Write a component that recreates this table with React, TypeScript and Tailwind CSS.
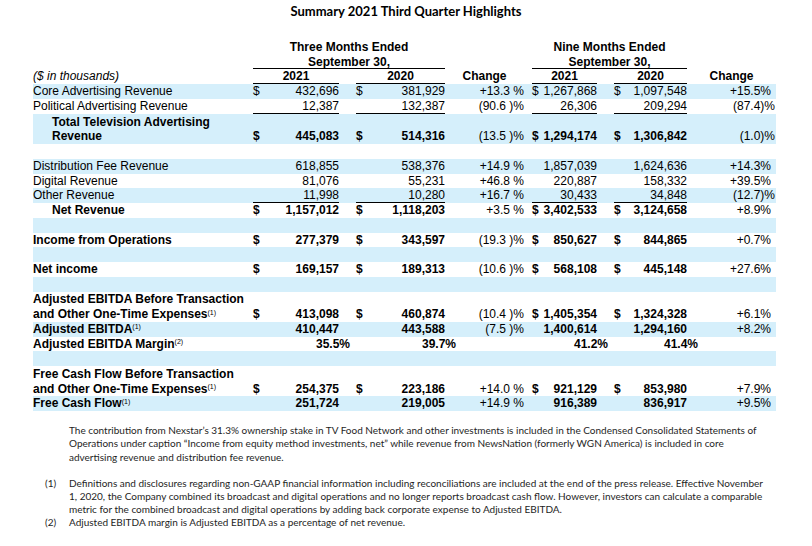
import type React from 'react';
import clsx from 'clsx';

type Four = [string, string, string, string];

type Line = {
  label?: React.ReactNode;
  band?: boolean;
  bold?: boolean;
  indent?: boolean;
  tall?: boolean;
  values?: Four;
  dollars?: boolean;
  change?: [string, string];
  rule?: boolean;
  margin?: boolean;
};

const Note = ({ n }: { n: string }) => <sup className="text-[7px] font-normal">({n})</sup>;

const lines: Line[] = [
  {
    label: 'Core Advertising Revenue',
    band: true,
    dollars: true,
    values: ['432,696', '381,929', '1,267,868', '1,097,548'],
    change: ['+13.3 %', '+15.5%'],
  },
  {
    label: 'Political Advertising Revenue',
    rule: true,
    values: ['12,387', '132,387', '26,306', '209,294'],
    change: ['(90.6 )%', '(87.4)%'],
  },
  {
    label: (
      <>
        Total Television Advertising
        <br />
        Revenue
      </>
    ),
    band: true,
    bold: true,
    indent: true,
    tall: true,
    dollars: true,
    values: ['445,083', '514,316', '1,294,174', '1,306,842'],
    change: ['(13.5 )%', '(1.0)%'],
  },
  {},
  {
    label: 'Distribution Fee Revenue',
    band: true,
    values: ['618,855', '538,376', '1,857,039', '1,624,636'],
    change: ['+14.9 %', '+14.3%'],
  },
  {
    label: 'Digital Revenue',
    values: ['81,076', '55,231', '220,887', '158,332'],
    change: ['+46.8 %', '+39.5%'],
  },
  {
    label: 'Other Revenue',
    band: true,
    rule: true,
    values: ['11,998', '10,280', '30,433', '34,848'],
    change: ['+16.7 %', '(12.7)%'],
  },
  {
    label: 'Net Revenue',
    bold: true,
    indent: true,
    dollars: true,
    values: ['1,157,012', '1,118,203', '3,402,533', '3,124,658'],
    change: ['+3.5 %', '+8.9%'],
  },
  { band: true },
  {
    label: 'Income from Operations',
    bold: true,
    dollars: true,
    values: ['277,379', '343,597', '850,627', '844,865'],
    change: ['(19.3 )%', '+0.7%'],
  },
  { band: true },
  {
    label: 'Net income',
    bold: true,
    dollars: true,
    values: ['169,157', '189,313', '568,108', '445,148'],
    change: ['(10.6 )%', '+27.6%'],
  },
  { band: true },
  {
    label: (
      <>
        Adjusted EBITDA Before Transaction
        <br />
        and Other One-Time Expenses
        <Note n="1" />
      </>
    ),
    bold: true,
    tall: true,
    dollars: true,
    values: ['413,098', '460,874', '1,405,354', '1,324,328'],
    change: ['(10.4 )%', '+6.1%'],
  },
  {
    label: (
      <>
        Adjusted EBITDA
        <Note n="1" />
      </>
    ),
    band: true,
    bold: true,
    values: ['410,447', '443,588', '1,400,614', '1,294,160'],
    change: ['(7.5 )%', '+8.2%'],
  },
  {
    label: (
      <>
        Adjusted EBITDA Margin
        <Note n="2" />
      </>
    ),
    bold: true,
    margin: true,
    values: ['35.5%', '39.7%', '41.2%', '41.4%'],
  },
  { band: true },
  {
    label: (
      <>
        Free Cash Flow Before Transaction
        <br />
        and Other One-Time Expenses
        <Note n="1" />
      </>
    ),
    bold: true,
    tall: true,
    dollars: true,
    values: ['254,375', '223,186', '921,129', '853,980'],
    change: ['+14.0 %', '+7.9%'],
  },
  {
    label: (
      <>
        Free Cash Flow
        <Note n="1" />
      </>
    ),
    band: true,
    bold: true,
    values: ['251,724', '219,005', '916,389', '836,917'],
    change: ['+14.9 %', '+9.5%'],
  },
];

// widths of the four money columns, left to right
const moneyWidths = ['w-[86px]', 'w-[89px]', 'w-[65px]', 'w-[73px]'];

function Money({ index, line }: { index: number; line: Line }) {
  const value = line.values?.[index];
  return (
    <div
      className={clsx(
        'flex h-[14.75px] shrink-0 justify-between',
        moneyWidths[index],
        line.rule && 'border-b border-black',
        line.bold && 'font-bold',
      )}
    >
      <span>{line.dollars ? '$' : ''}</span>
      {line.margin ? <span className="-mr-[11px]">{value}</span> : <span>{value}</span>}
    </div>
  );
}

function Change({ value, wide }: { value?: string; wide?: boolean }) {
  if (wide) {
    const positive = value?.startsWith('+');
    return (
      <div className={clsx('h-[14.75px] w-[89px] shrink-0 text-right', positive ? 'pr-[5px]' : 'pr-px')}>{value}</div>
    );
  }
  return <div className="h-[14.75px] w-[79px] shrink-0 text-right">{value}</div>;
}

function Row({ line }: { line: Line }) {
  return (
    <div
      className={clsx(
        'flex items-end leading-[14.75px]',
        line.tall ? 'h-[30.3px]' : 'h-[14.75px]',
        line.band && 'bg-[#d5effb]',
      )}
    >
      <div className={clsx('w-[220px] shrink-0 self-stretch', line.indent && 'pl-[19px]', line.bold && 'font-bold')}>
        <div className="flex h-full flex-col justify-end">
          <div>{line.label}</div>
        </div>
      </div>
      <Money index={0} line={line} />
      <div className="w-[17px] shrink-0" />
      <Money index={1} line={line} />
      <Change value={line.change?.[0]} />
      <div className="w-[8px] shrink-0" />
      <Money index={2} line={line} />
      <div className="w-[17px] shrink-0" />
      <Money index={3} line={line} />
      <Change value={line.change?.[1]} wide />
    </div>
  );
}

function Header() {
  return (
    <>
      <div className="flex h-[29px] font-bold leading-[14.5px]">
        <div className="w-[220px] shrink-0" />
        <div className="w-[192px] shrink-0 border-b border-black text-center">
          Three Months Ended
          <br />
          September 30,
        </div>
        <div className="w-[87px] shrink-0" />
        <div className="w-[155px] shrink-0 border-b border-black text-center">
          Nine Months Ended
          <br />
          September 30,
        </div>
      </div>
      <div className="flex h-[15.3px] leading-[15px]">
        <div className="w-[220px] shrink-0 italic">($ in thousands)</div>
        <div className="w-[86px] shrink-0 border-b border-black text-center font-bold">2021</div>
        <div className="w-[17px] shrink-0" />
        <div className="w-[89px] shrink-0 border-b border-black text-center font-bold">2020</div>
        <div className="w-[79px] shrink-0 text-center font-bold">Change</div>
        <div className="w-[8px] shrink-0" />
        <div className="w-[65px] shrink-0 border-b border-black text-center font-bold">2021</div>
        <div className="w-[17px] shrink-0" />
        <div className="w-[73px] shrink-0 border-b border-black text-center font-bold">2020</div>
        <div className="w-[89px] shrink-0 text-center font-bold">Change</div>
      </div>
    </>
  );
}

export default function App() {
  return (
    <div className="h-[546px] w-[812px] overflow-hidden bg-white text-black">
      <h1 className="pt-[3px] text-center font-['Lato',sans-serif] text-[13px] font-bold leading-[16px]">
        Summary 2021 Third Quarter Highlights
      </h1>

      <div className="ml-[33px] mt-[21px] w-[743px] font-['Liberation_Sans',Arial,sans-serif] text-[12px]">
        <Header />
        {lines.map((line, i) => (
          <Row key={i} line={line} />
        ))}
      </div>

      <div className="mt-[12.8px] grid grid-cols-[24px_1fr] pl-[45px] font-['Lato',sans-serif] text-[10px] whitespace-nowrap text-[#1e1e1e]">
        <span />
        <p className="leading-[13.3px]">
          The contribution from Nexstar’s 31.3% ownership stake in TV Food Network and other investments is included in
          the Condensed Consolidated Statements of
          <br />
          Operations under caption “Income from equity method investments, net” while revenue from NewsNation (formerly
          WGN America) is included in core
          <br />
          advertising revenue and distribution fee revenue.
        </p>
        <span className="mt-[12.9px] leading-[13.1px]">(1)</span>
        <p className="mt-[12.9px] leading-[13.1px]">
          Definitions and disclosures regarding non-GAAP financial information including reconciliations are included at
          the end of the press release. Effective November
          <br />
          1, 2020, the Company combined its broadcast and digital operations and no longer reports broadcast cash flow.
          However, investors can calculate a comparable
          <br />
          metric for the combined broadcast and digital operations by adding back corporate expense to Adjusted EBITDA.
        </p>
        <span className="leading-[13.1px]">(2)</span>
        <p className="leading-[13.1px]">Adjusted EBITDA margin is Adjusted EBITDA as a percentage of net revenue.</p>
      </div>
    </div>
  );
}
